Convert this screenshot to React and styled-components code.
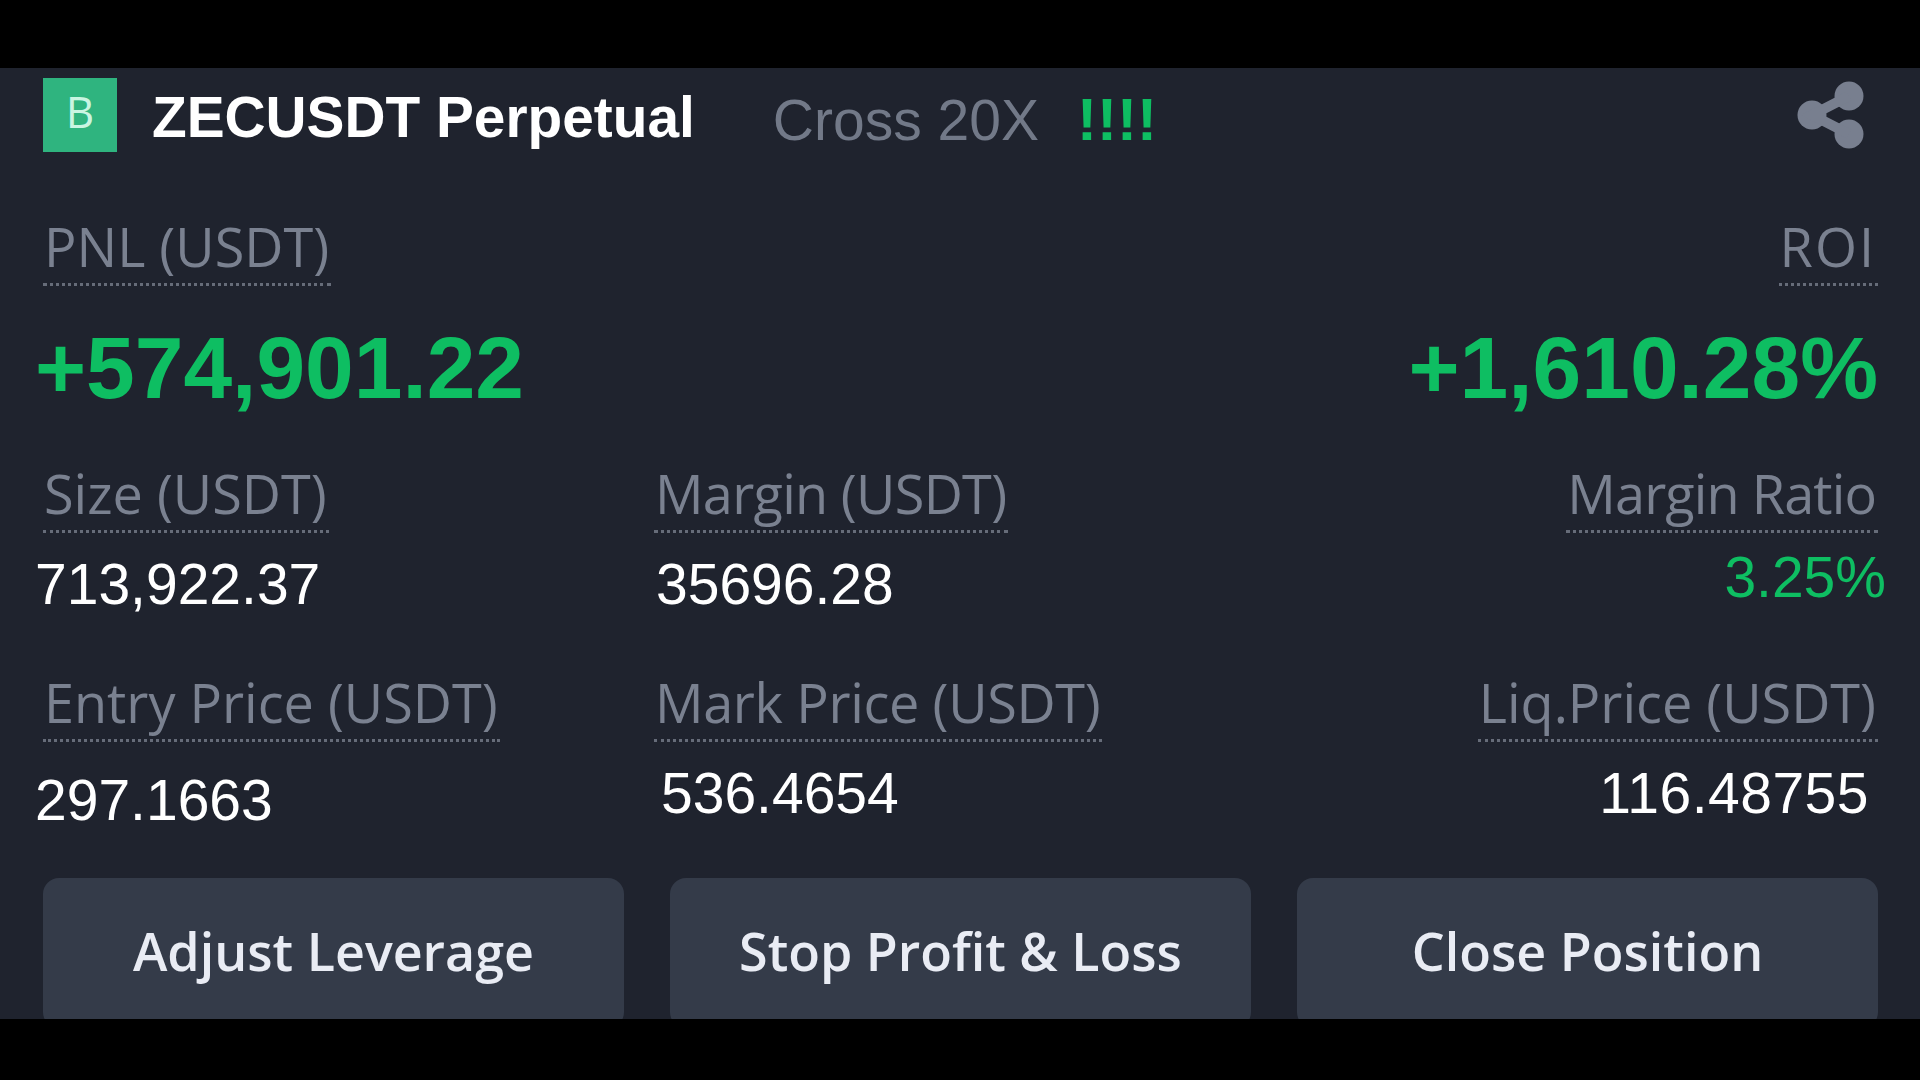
import React from "react";
import styled, { createGlobalStyle } from "styled-components";

const Global = createGlobalStyle`
  html, body { margin: 0; padding: 0; background: #000; }
`;

const Screen = styled.div`
  width: 1920px;
  height: 1080px;
  background: #000;
  padding: 68px 0 61px;
  box-sizing: border-box;
  overflow: hidden;
`;

const Panel = styled.main`
  height: 100%;
  background: #1f232e;
  box-sizing: border-box;
  padding: 9px 42px 0 43px;
  overflow: hidden;
  font-family: "Open Sans", "Noto Sans", sans-serif;
`;

const Header = styled.header`
  display: flex;
  align-items: center;
  height: 76px;
  padding-right: 12px;
`;

const Logo = styled.div`
  width: 74px;
  height: 74px;
  background: #2fb47f;
  color: #c9f5e2;
  font: 400 44px/66px "Open Sans", sans-serif;
  text-align: center;
  flex: none;
`;

const Title = styled.h1`
  margin: 5px 0 0 35px;
  font: 700 56.8px/76px "Liberation Sans", sans-serif;
  color: #fff;
  white-space: nowrap;
`;

const Mode = styled.span`
  margin: 10px 0 0 78px;
  font: 400 57px/76px "Liberation Sans", sans-serif;
  color: #727988;
  white-space: nowrap;
`;

const Alert = styled.span`
  margin: 10px 0 0 38px;
  font: 700 60px/76px "Liberation Sans", sans-serif;
  color: #0ebe62;
`;

const ShareIcon = styled.svg`
  margin-left: auto;
  width: 70px;
  height: 70px;
  flex: none;
`;

const Row = styled.section`
  display: grid;
  grid-template-columns: ${(p) => p.$cols || "611px 1fr 1fr"};
  margin-top: ${(p) => p.$top}px;
`;

const Cell = styled.div`
  display: flex;
  flex-direction: column;
  align-items: ${(p) => (p.$right ? "flex-end" : "flex-start")};
`;

const Label = styled.span`
  font-size: 54px;
  line-height: 62px;
  letter-spacing: ${(p) => p.$track || 0}px;
  color: #7a8190;
  border-bottom: 3px dotted #666c79;
  padding: 0 2px 6px 1px;
  white-space: nowrap;
`;

const Big = styled.span`
  margin: 36px 0 0 ${(p) => p.$x || 0}px;
  font: 700 87.5px/92px "Liberation Sans", sans-serif;
  color: #0ebe62;
  white-space: nowrap;
`;

const Value = styled.span`
  margin-top: ${(p) => p.$y ?? 20}px;
  margin-left: ${(p) => p.$x || 0}px;
  margin-right: ${(p) => p.$r || 0}px;
  font: 400 57px/62px "Liberation Sans", sans-serif;
  letter-spacing: ${(p) => p.$track || 0}px;
  color: ${(p) => (p.$green ? "#0ebe62" : "#fff")};
  white-space: nowrap;
`;

const Actions = styled.div`
  display: grid;
  grid-template-columns: repeat(3, 1fr);
  gap: 46px;
  margin-top: 47px;
`;

const Action = styled.button`
  height: 150px;
  border: 0;
  border-radius: 16px;
  background: #343b49;
  color: #e9ecf4;
  font: 600 52px/1 "Open Sans", sans-serif;
  padding: 0 0 4px;
`;

export default function App() {
  return (
    <Screen>
      <Global />
      <Panel>
        <Header>
          <Logo>B</Logo>
          <Title>ZECUSDT Perpetual</Title>
          <Mode>Cross 20X</Mode>
          <Alert>!!!!</Alert>
          <ShareIcon viewBox="0 0 70 70" aria-hidden="true">
            <g fill="#787f8f">
              <circle cx="53" cy="16" r="14.5" />
              <circle cx="16" cy="35" r="14.5" />
              <circle cx="53" cy="54" r="14.5" />
            </g>
            <path d="M53 16 16 35 53 54" fill="none" stroke="#787f8f" strokeWidth="10" />
          </ShareIcon>
        </Header>
        <Row $cols="1fr 1fr" $top={62}>
          <Cell>
            <Label>PNL (USDT)</Label>
            <Big $x={-8}>+574,901.22</Big>
          </Cell>
          <Cell $right>
            <Label $track={2}>ROI</Label>
            <Big>+1,610.28%</Big>
          </Cell>
        </Row>
        <Row $top={48}>
          <Cell>
            <Label>Size (USDT)</Label>
            <Value $x={-8}>713,922.37</Value>
          </Cell>
          <Cell>
            <Label $track={-0.7}>Margin (USDT)</Label>
            <Value $x={2}>35696.28</Value>
          </Cell>
          <Cell $right>
            <Label $track={-0.9}>Margin Ratio</Label>
            <Value $green $y={13} $r={-8}>3.25%</Value>
          </Cell>
        </Row>
        <Row $top={56}>
          <Cell>
            <Label>Entry Price (USDT)</Label>
            <Value $x={-8} $y={27}>297.1663</Value>
          </Cell>
          <Cell>
            <Label $track={-0.35}>Mark Price (USDT)</Label>
            <Value $x={7} $y={20}>536.4654</Value>
          </Cell>
          <Cell $right>
            <Label>Liq.Price (USDT)</Label>
            <Value $y={20} $r={9} $track={0.5}>116.48755</Value>
          </Cell>
        </Row>
        <Actions>
          <Action>Adjust Leverage</Action>
          <Action>Stop Profit &amp; Loss</Action>
          <Action>Close Position</Action>
        </Actions>
      </Panel>
    </Screen>
  );
}
